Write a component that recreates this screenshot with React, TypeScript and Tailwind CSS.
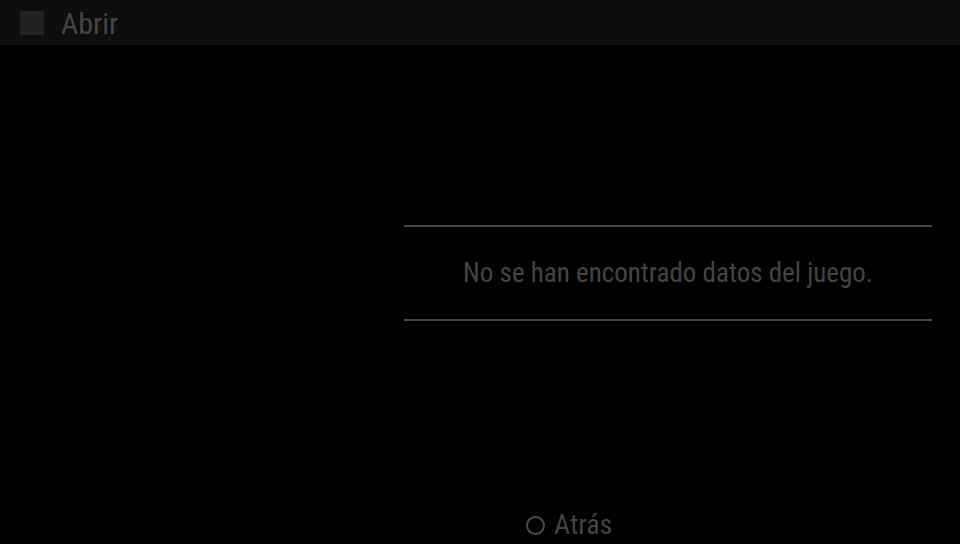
export default function App() {
  return (
    <div className="w-[960px] h-[544px] bg-black flex flex-col overflow-hidden font-['Roboto_Condensed','Roboto',sans-serif]">
      <header className="h-[45px] bg-[#0d0d0d] flex items-center pl-5 gap-[17px] shrink-0">
        <div className="w-6 h-6 bg-[#222222]" />
        <span className="text-[30px] leading-none text-[#454545] pt-[3px]">Abrir</span>
      </header>
      <main className="flex-1 flex flex-col">
        <div className="h-[180px]" />
        <div className="ml-[404px] w-[528px] border-y-2 border-[#4a4a4a] h-[96px] flex items-center justify-center">
          <p className="text-[27px] text-[#454545] whitespace-nowrap">No se han encontrado datos del juego.</p>
        </div>
        <div className="flex-1" />
        <footer className="h-[40px] flex items-center gap-[9px] pl-[526px] pt-[2px]">
          <span className="w-[19px] h-[19px] rounded-full border-2 border-[#4a4a4a]" />
          <span className="text-[28px] leading-none text-[#454545]">Atrás</span>
        </footer>
      </main>
    </div>
  );
}
